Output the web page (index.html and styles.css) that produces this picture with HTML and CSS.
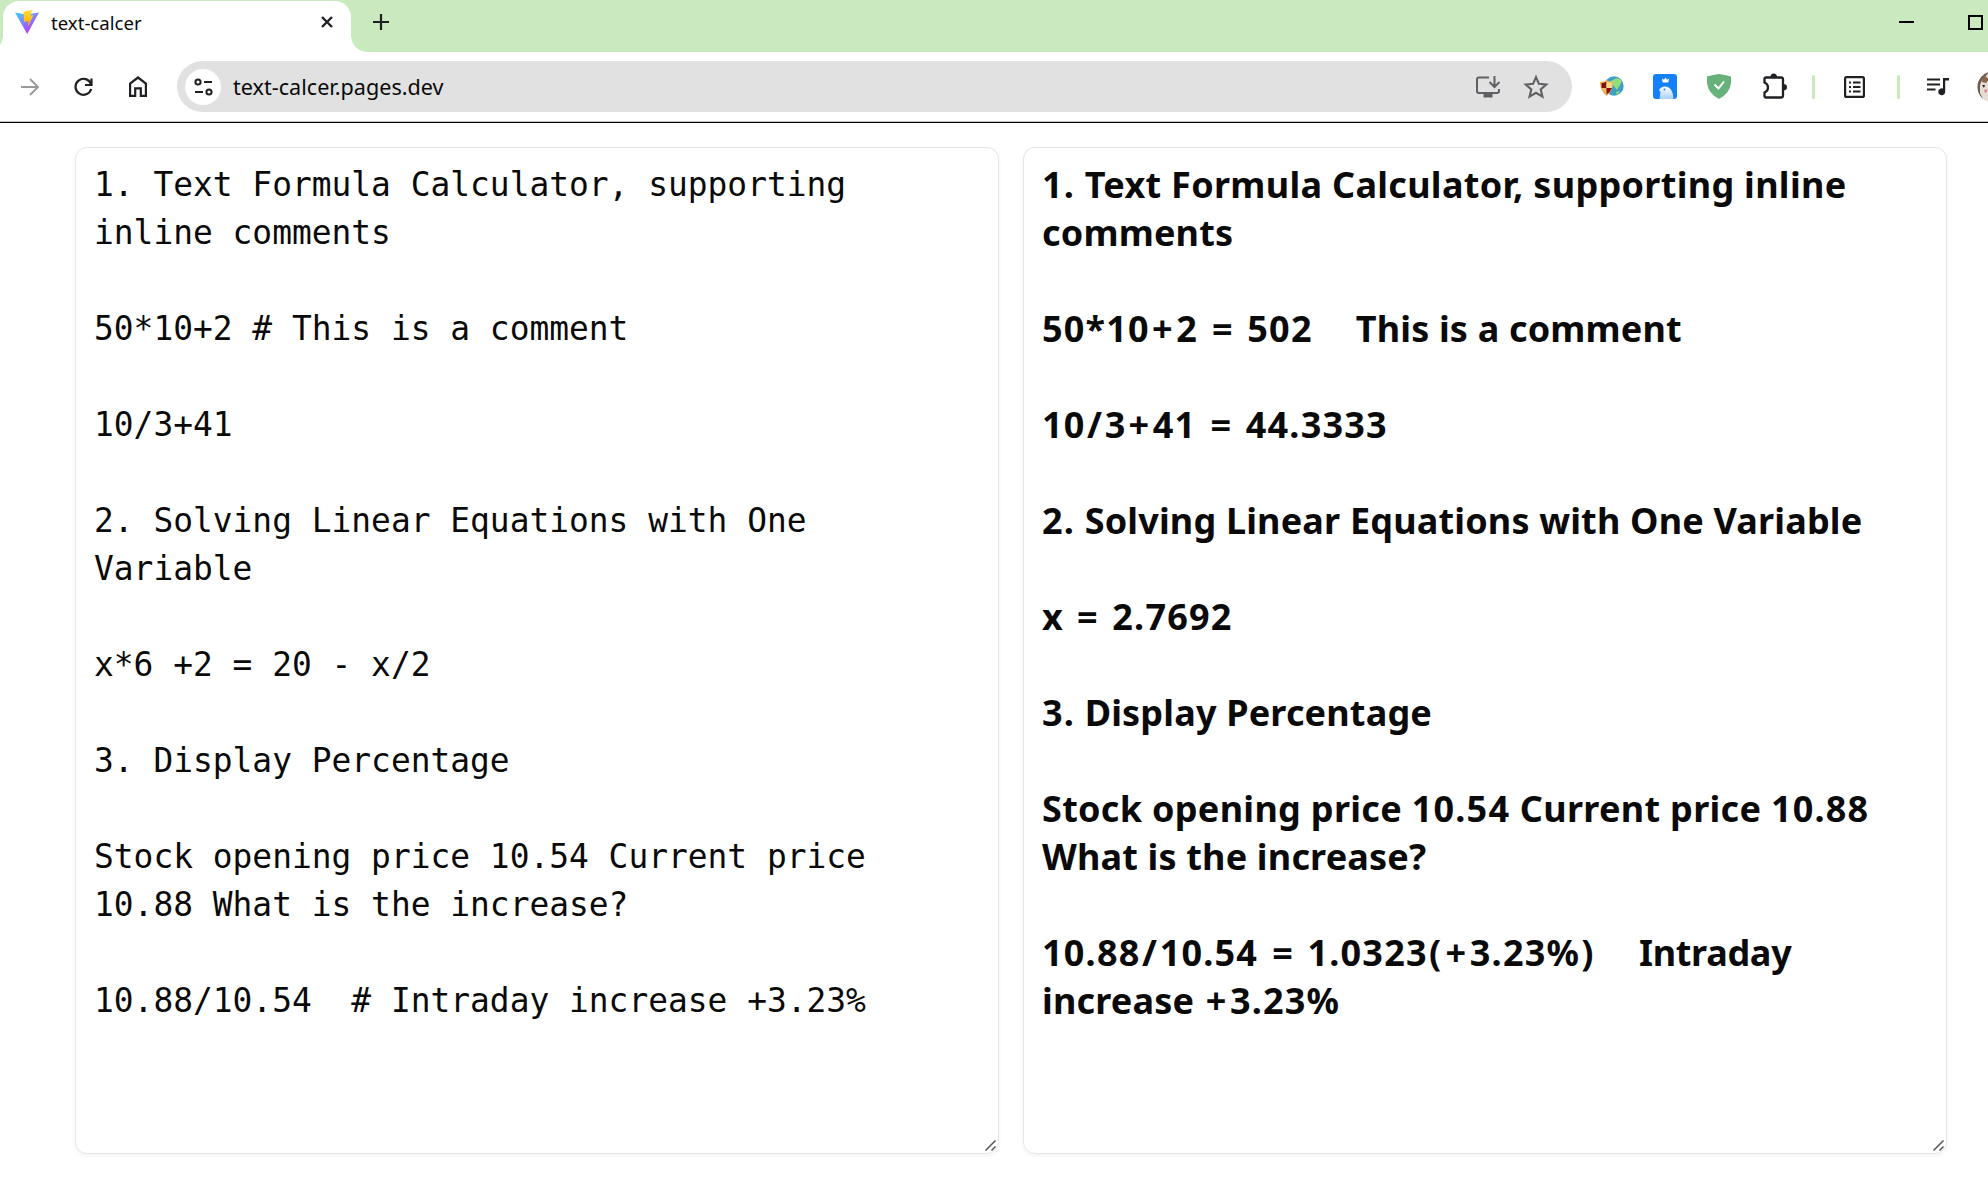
FILE: index.html
```
<!DOCTYPE html>
<html lang="en">
<head>
<meta charset="utf-8">
<title>text-calcer</title>
<link rel="stylesheet" href="styles.css">
</head>
<body>
<header class="browser">
  <div class="tabstrip">
    <div class="tab">
      <svg class="logo" width="26" height="26" viewBox="0 0 26 26"><defs><linearGradient id="v" x1="0" y1="0" x2=".6" y2="1"><stop offset="0" stop-color="#41d1ff"/><stop offset="1" stop-color="#bd34fe"/></linearGradient><linearGradient id="y" x1="0" y1="0" x2="0" y2="1"><stop offset="0" stop-color="#ffdd35"/><stop offset="1" stop-color="#ffa800"/></linearGradient></defs><path d="M1 3.500L13 5.500 25 3.500 13.200 25z" fill="url(#v)"/><path d="M9.500 2.500L18 1 16.500 6.500 19.500 6 14 18 14.500 12 10 13z" fill="url(#y)"/></svg>
      <span class="tab-title">text-calcer</span>
      <svg class="close" width="14" height="14" viewBox="0 0 14 14"><path d="M2 2L12 12M12 2L2 12" stroke="#1f2024" stroke-width="2.400"/></svg>
    </div>
    <svg class="newtab" width="16" height="16" viewBox="0 0 16 16"><path d="M8 0V16M0 8H16" stroke="#1f2024" stroke-width="2.200"/></svg>
    <div class="window-buttons">
      <svg width="15" height="16" viewBox="0 0 15 16"><path d="M0 8H15" stroke="#000" stroke-width="2"/></svg>
      <svg width="15" height="16" viewBox="0 0 15 16"><path d="M1 2H14V15H1z" fill="none" stroke="#000" stroke-width="2"/></svg>
    </div>
  </div>
  <div class="toolbar">
    <svg class="forward" width="18" height="18" viewBox="0 0 18 18" fill="none" stroke="#9a9a9c" stroke-width="2"><path d="M0 9H17M9 1L17 9 9 17"/></svg>
    <svg class="reload" width="19" height="20" viewBox="0 0 19 20" fill="none" stroke="#1f2024" stroke-width="2.200"><path d="M17 7A8 8 0 1 0 17.200 12M17.500 1.500V8H11"/></svg>
    <svg class="home" width="18" height="21" viewBox="0 0 18 21" fill="none" stroke="#1f2024" stroke-width="2.200"><path d="M1.100 19.800V7.500L9 1.500 16.900 7.500V19.800H11.800V12.300H6.200V19.800z"/></svg>
    <div class="omnibox">
      <span class="site-info"><svg width="19" height="18" viewBox="0 0 19 18" fill="none" stroke="#1f2024" stroke-width="2"><circle cx="4" cy="4" r="2.600"/><circle cx="15" cy="14" r="2.600"/><path d="M10 4H18M1 14H9"/></svg></span>
      <span class="url">text-calcer.pages.dev</span>
      <svg class="install" width="24" height="22" viewBox="0 0 24 22" fill="none" stroke="#5f6064" stroke-width="2"><path d="M13 1.500H3Q1 1.500 1 3.500V15Q1 17 3 17H21Q23 17 23 15V13M18.500 0V10.500M13.500 6L18.500 11 23.500 6"/><path d="M7.500 18H16.500V21.500H7.500z" fill="#5f6064" stroke="none"/></svg>
      <svg class="star" width="28" height="26" viewBox="0 0 24 22" fill="none" stroke="#5f6064" stroke-width="1.800"><path d="M12 2.500L14.500 8.300 20.800 8.900 16 13 17.500 19.200 12 16 6.500 19.200 8 13 3.200 8.900 9.500 8.300z"/></svg>
    </div>
    <div class="extensions">
      <svg class="globe" width="24" height="22" viewBox="0 0 24 22"><circle cx="14" cy="10" r="9.700" fill="#3f9fc9"/><path d="M13 4Q18 0 22 5L20 9 17 14 13 9 9 6zM16 16L20 15 17 19z" fill="#8fe07a"/><path d="M0 6Q4 6 6.500 4 9 6 13 6 13.500 15 6.500 20 0 15 0 6z" fill="#f3b25b"/><path d="M1.500 7Q4 7 6.500 5.500V12H12Q10.500 16 6.500 18.500V12H1.500z" fill="#80130e"/><path d="M6.500 5.500Q9 7 11.800 7V12H6.500z" fill="#ffda8a"/></svg>
      <svg class="bird" width="24" height="25" viewBox="0 0 24 25"><defs><linearGradient id="b" x1="0" y1="0" x2="0" y2="1"><stop offset="0" stop-color="#fff"/><stop offset="1" stop-color="#a9cfff"/></linearGradient></defs><rect width="24" height="25" rx="3" fill="#1580fb"/><path d="M6.500 25L7.500 17.500 6 16.500Q7 12.500 13 12.500 20 13.500 20.500 25z" fill="url(#b)"/><path d="M9 4.500L11 5.800 12.500 3.500 14 5.800 16 4.500 15.300 8.500H9.700z" fill="#fff"/><circle cx="11.500" cy="15.500" r=".9" fill="#1580fb"/></svg>
      <svg class="shield" width="24" height="25" viewBox="0 0 24 25"><path d="M12 0Q18 .5 24 2.500V9Q23 19 12 25 1 19 0 9V2.500Q6 .5 12 0z" fill="#67b279"/><path d="M7.500 10.500L11.500 14.500 17 7.500" fill="none" stroke="#fff" stroke-width="2"/></svg>
      <svg class="puzzle" width="24" height="25" viewBox="0 0 24 25"><path d="M3 3.500H18Q20 3.500 20 5.500V21.500Q20 23.500 18 23.500H3Q1.500 23.500 1.500 22V18.500Q5 17 5 13.500 5 10 1.500 8.500V5Q1.500 3.500 3 3.500z" fill="none" stroke="#1f2024" stroke-width="2.300"/><path d="M7.500 3Q7.500 -.5 10.700 -.5T14 3zM20 10Q24 10 24 13.200T20 16.500z" fill="#1f2024"/></svg>
      <i class="separator"></i>
      <svg class="reading" width="21" height="22" viewBox="0 0 21 22"><rect x="1.100" y="1.100" width="18.800" height="19.800" rx="1.500" fill="none" stroke="#1f2024" stroke-width="2.200"/><path d="M5 6.500H7M9 6.500H16.500M5 11H7M9 11H16.500M5 15.500H7M9 15.500H16.500" stroke="#1f2024" stroke-width="2"/></svg>
      <i class="separator"></i>
      <svg class="media" width="22" height="18" viewBox="0 0 22 18"><path d="M0 1.500H13M0 6.500H13M0 11.500H8.500" stroke="#1f2024" stroke-width="2.200"/><path d="M16 0H22V2.500H18.200V13.500A3.500 3.500 0 1 1 16 10.500z" fill="#1f2024"/></svg>
      <svg class="avatar" width="32" height="32" viewBox="0 0 32 32"><defs><clipPath id="a"><circle cx="16" cy="16" r="15.500"/></clipPath></defs><g clip-path="url(#a)"><rect width="32" height="32" fill="#e6ddd5"/><path d="M0 0H12L9 5 5 9 3 14 3 22 7 30 0 32z" fill="#6e5b52"/><path d="M6 4L12 8 9 12 5 11z" fill="#8a6448"/><path d="M5 14L8 14 7 17z" fill="#2d2724"/><path d="M7 19L10 18 10 21 8 22z" fill="#dc8d9a"/></g></svg>
    </div>
  </div>
</header>
<main class="workspace">
  <section class="pane source">
    <div class="line">1. Text Formula Calculator, supporting</div>
    <div class="line">inline comments</div>
    <div class="line"></div>
    <div class="line">50*10+2 # This is a comment</div>
    <div class="line"></div>
    <div class="line">10/3+41</div>
    <div class="line"></div>
    <div class="line">2. Solving Linear Equations with One</div>
    <div class="line">Variable</div>
    <div class="line"></div>
    <div class="line">x*6 +2 = 20 - x/2</div>
    <div class="line"></div>
    <div class="line">3. Display Percentage</div>
    <div class="line"></div>
    <div class="line">Stock opening price 10.54 Current price</div>
    <div class="line">10.88 What is the increase?</div>
    <div class="line"></div>
    <div class="line">10.88/10.54  # Intraday increase +3.23%</div>
    <svg class="grip" width="11" height="11" viewBox="0 0 11 11"><path d="M.5 10.500L10.500 .5M6.500 10.500L10.500 6.500" stroke="#555" stroke-width="1.500"/></svg>
  </section>
  <section class="pane result">
    <div class="line wide"><span class="num">1.</span> Text Formula Calculator, supporting inline</div>
    <div class="line">comments</div>
    <div class="line"></div>
    <div class="line"><span class="num">50*10<span class="plus">+</span>2</span> <span class="eq">=</span> <span class="num">502</span><span class="note">This is a comment</span></div>
    <div class="line"></div>
    <div class="line"><span class="num">10<span class="div">/</span>3<span class="plus">+</span>41</span> <span class="eq">=</span> <span class="num">44.3333</span></div>
    <div class="line"></div>
    <div class="line"><span class="num">2.</span> Solving Linear Equations with One Variable</div>
    <div class="line"></div>
    <div class="line">x <span class="eq">=</span> <span class="num">2.7692</span></div>
    <div class="line"></div>
    <div class="line"><span class="num">3.</span> Display Percentage</div>
    <div class="line"></div>
    <div class="line wide">Stock opening price <span class="num">10.54</span> Current price <span class="num">10.88</span></div>
    <div class="line">What is the increase?</div>
    <div class="line"></div>
    <div class="line"><span class="num">10.88<span class="div">/</span>10.54</span> <span class="eq">=</span> <span class="num">1.0323<span class="paren">(</span><span class="plus">+</span>3.23%<span class="paren">)</span></span><span class="note tight">Intraday</span></div>
    <div class="line">increase <span class="num"><span class="plus">+</span>3.23%</span></div>
    <svg class="grip" width="11" height="11" viewBox="0 0 11 11"><path d="M.5 10.500L10.500 .5M6.500 10.500L10.500 6.500" stroke="#555" stroke-width="1.500"/></svg>
  </section>
</main>
</body>
</html>
```
FILE: styles.css
```
* { box-sizing: border-box; }
body { margin: 0; background: #fff; color: #0a0a0a; font-family: "Noto Sans", sans-serif; width: 1988px; height: 1197px; overflow: hidden; }
svg { display: block; flex: none; overflow: visible; }
.browser { height: 123px; border-bottom: 1px solid #000; box-shadow: inset 0 -1px #c4c4c4; overflow: hidden; }
.tabstrip { height: 52px; background: #cae9bf; display: flex; align-items: flex-start; }
.tab { position: relative; width: 348px; height: 51px; margin: 1px 0 0 3px; padding: 0 17px 0 11px; background: #fff; border-radius: 16px 16px 0 0; display: flex; align-items: flex-start; }
.tab::before, .tab::after { content: ""; position: absolute; bottom: 0; width: 16px; height: 16px; }
.tab::before { left: -16px; background: radial-gradient(circle at 0 0, transparent 15.500px, #fff 16px); }
.tab::after { right: -16px; background: radial-gradient(circle at 100% 0, transparent 15.500px, #fff 16px); }
.logo { margin-top: 8px; }
.tab-title { flex: 1; margin-left: 11px; font-size: 18.600px; line-height: 44px; white-space: nowrap; }
.close { margin-top: 14px; }
.newtab { margin: 14px 0 0 22px; }
.window-buttons { display: flex; gap: 54px; margin: 14px 5px 0 auto; }
.toolbar { height: 69px; display: flex; align-items: center; }
.forward { margin-left: 21px; }
.reload { margin-left: 35px; }
.home { margin-left: 36px; }
.omnibox { flex: none; width: 1395px; height: 51px; margin-left: 30px; padding: 0 22px 0 8px; background: #e1e1e1; border-radius: 26px; display: flex; align-items: center; }
.site-info { width: 36px; height: 36px; border-radius: 50%; background: #fff; display: grid; place-items: center; }
.url { margin-left: 12px; font-size: 21.600px; flex: 1; }
.star { margin-left: 22px; }
.extensions { flex: none; display: flex; align-items: center; margin-left: 28px; }
.bird { margin-left: 29px; }
.shield { margin-left: 30px; }
.puzzle { margin-left: 32px; }
.separator { width: 3px; height: 24px; background: #cae9bf; border-radius: 2px; margin-left: 25px; }
.reading { margin-left: 29px; }
.reading + .separator { margin-left: 32px; }
.media { margin-left: 27px; }
.avatar { margin-left: 28px; }
.workspace { display: grid; grid-template-columns: 924px 924px; gap: 24px; padding: 24px 0 0 75px; }
.pane { position: relative; height: 1007px; border: 1px solid #e5e5e5; border-radius: 12px; padding: 13px 18px; box-shadow: 0 2px 4px rgba(0,0,0,.05); }
.line { height: 48px; line-height: 48px; white-space: pre; }
.source { font-family: "DejaVu Sans Mono", monospace; font-size: 32.880px; }
.result { font-weight: 700; font-size: 36px; letter-spacing: .17px; }
.wide { letter-spacing: .3px; }
.num { letter-spacing: 1.200px; }
.eq { padding: 0 5px 0 4.500px; }
.plus { padding: 0 2.500px 0 2px; }
.div { padding: 0 1.500px; }
.paren { padding: 0 1.200px; }
.note { margin-left: 43px; }
.tight { letter-spacing: -.3px; }
.grip { position: absolute; right: 2px; bottom: 2px; }
```
